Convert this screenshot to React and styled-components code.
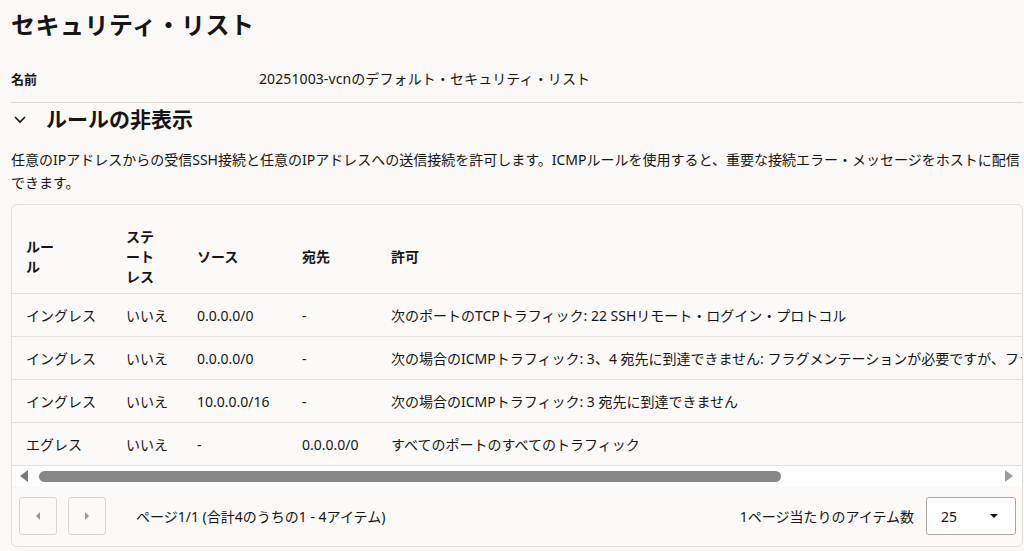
import styled, { createGlobalStyle } from "styled-components";

const GlobalStyle = createGlobalStyle`
  html, body {
    margin: 0;
    padding: 0;
    background: #fbf9f8;
    overflow: hidden;
  }
  body {
    font-family: "Noto Sans", "Noto Sans CJK JP", sans-serif;
    color: #161513;
  }
`;

const columns = "100px 71px 105px 89px 921px";
const tableWidth = 1300;
const viewWidth = 1010;

const rules = [
  {
    type: "イングレス",
    stateless: "いいえ",
    source: "0.0.0.0/0",
    dest: "-",
    allow: "次のポートのTCPトラフィック: 22 SSHリモート・ログイン・プロトコル",
  },
  {
    type: "イングレス",
    stateless: "いいえ",
    source: "0.0.0.0/0",
    dest: "-",
    allow:
      "次の場合のICMPトラフィック: 3、4 宛先に到達できません: フラグメンテーションが必要ですが、フラグメント化しないが設定されていました",
  },
  {
    type: "イングレス",
    stateless: "いいえ",
    source: "10.0.0.0/16",
    dest: "-",
    allow: "次の場合のICMPトラフィック: 3 宛先に到達できません",
  },
  {
    type: "エグレス",
    stateless: "いいえ",
    source: "-",
    dest: "0.0.0.0/0",
    allow: "すべてのポートのすべてのトラフィック",
  },
];

export default function App() {
  return (
    <Page>
      <GlobalStyle />
      <Title>セキュリティ・リスト</Title>
      <NameRow>
        <NameLabel>名前</NameLabel>
        <NameValue>20251003-vcnのデフォルト・セキュリティ・リスト</NameValue>
      </NameRow>
      <SectionHeader>
        <Chevron width="14" height="14" viewBox="0 0 14 14">
          <path d="M2 5 L7 10 L12 5" fill="none" stroke="#161513" strokeWidth="1.6" />
        </Chevron>
        <SectionTitle>ルールの非表示</SectionTitle>
      </SectionHeader>
      <Description>
        任意のIPアドレスからの受信SSH接続と任意のIPアドレスへの送信接続を許可します。ICMPルールを使用すると、重要な接続エラー・メッセージをホストに配信できます。
      </Description>
      <Card>
        <ScrollArea>
          <Table>
            <HeaderRow>
              <HeadCell>
                <HeadLabel $max={30}>ルール</HeadLabel>
              </HeadCell>
              <HeadCell>
                <HeadLabel $max={30}>ステートレス</HeadLabel>
              </HeadCell>
              <HeadCell>
                <HeadLabel>ソース</HeadLabel>
              </HeadCell>
              <HeadCell>
                <HeadLabel>宛先</HeadLabel>
              </HeadCell>
              <HeadCell>
                <HeadLabel>許可</HeadLabel>
              </HeadCell>
            </HeaderRow>
            {rules.map((r, i) => (
              <BodyRow key={i}>
                <Cell>{r.type}</Cell>
                <Cell>{r.stateless}</Cell>
                <Cell>{r.source}</Cell>
                <Cell>{r.dest}</Cell>
                <Cell>{r.allow}</Cell>
              </BodyRow>
            ))}
          </Table>
        </ScrollArea>
        <ScrollBar>
          <ScrollArrow $dir="left" />
          <Track>
            <Thumb style={{ width: `${(viewWidth / tableWidth) * 100}%` }} />
          </Track>
          <ScrollArrow $dir="right" />
        </ScrollBar>
        <Footer>
          <Pager>
            <PageButton aria-label="前へ">
              <Arrow $dir="left" />
            </PageButton>
            <PageButton aria-label="次へ">
              <Arrow $dir="right" />
            </PageButton>
            <PageInfo>ページ1/1 (合計4のうちの1 - 4アイテム)</PageInfo>
          </Pager>
          <PerPage>
            <PerPageLabel>1ページ当たりのアイテム数</PerPageLabel>
            <Select>
              <span>25</span>
              <Caret />
            </Select>
          </PerPage>
        </Footer>
      </Card>
    </Page>
  );
}

const Page = styled.div`
  width: 1012px;
  padding: 9px 0 0 11px;
`;

const Title = styled.h1`
  margin: 0;
  font-size: 24px;
  line-height: 32px;
  font-weight: 700;
  letter-spacing: 0.5px;
`;

const NameRow = styled.div`
  display: flex;
  align-items: center;
  height: 42px;
  margin-top: 16px;
  border-bottom: 1px solid #dedbd7;
  padding-bottom: 3px;
`;

const NameLabel = styled.div`
  width: 248px;
  font-size: 13px;
  font-weight: 700;
`;

const NameValue = styled.div`
  font-size: 14px;
  letter-spacing: 0.1px;
`;

const SectionHeader = styled.div`
  display: flex;
  align-items: center;
  height: 30px;
  margin-top: 1px;
`;

const Chevron = styled.svg`
  margin: 0 19px 0 2px;
`;

const SectionTitle = styled.h2`
  margin: 0;
  font-size: 21px;
  font-weight: 700;
  line-height: 30px;
`;

const Description = styled.p`
  margin: 14px 0 0;
  font-size: 14px;
  line-height: 23px;
`;

const Card = styled.div`
  margin-top: 10px;
  border: 1px solid #e2dfdb;
  border-radius: 6px;
  background: #fbfaf9;
  padding-top: 16px;
  overflow: hidden;
`;

const ScrollArea = styled.div`
  overflow: hidden;
`;

const Table = styled.div`
  width: ${tableWidth}px;
`;

const Row = styled.div`
  display: grid;
  grid-template-columns: ${columns};
  padding-left: 14px;
  align-items: center;
  border-bottom: 1px solid #e5e2de;
`;

const HeaderRow = styled(Row)`
  height: 72px;
`;

const BodyRow = styled(Row)`
  height: 42px;
`;

const HeadCell = styled.div`
  font-size: 14px;
  font-weight: 700;
  line-height: 20px;
`;

const HeadLabel = styled.div`
  max-width: ${(p) => (p.$max ? `${p.$max}px` : "none")};
`;

const Cell = styled.div`
  font-size: 14px;
  white-space: nowrap;
`;

const ScrollBar = styled.div`
  display: flex;
  align-items: center;
  height: 20px;
  background: #ffffff;
  padding: 0 9px 0 8px;
  gap: 11px;
`;

const ScrollArrow = styled.span`
  flex: none;
  width: 0;
  height: 0;
  border-top: 6px solid transparent;
  border-bottom: 6px solid transparent;
  ${(p) =>
    p.$dir === "left"
      ? "border-right: 8px solid #7a7a7a;"
      : "border-left: 8px solid #9c9c9c;"}
`;

const Track = styled.div`
  flex: 1;
  display: flex;
`;

const Thumb = styled.div`
  height: 11px;
  border-radius: 6px;
  background: #888888;
`;

const Footer = styled.div`
  display: flex;
  align-items: center;
  justify-content: space-between;
  height: 60px;
  padding: 0 6px 0 7px;
`;

const Pager = styled.div`
  display: flex;
  align-items: center;
  gap: 11px;
`;

const PageButton = styled.button`
  width: 38px;
  height: 38px;
  border: 1px solid #d9d6d2;
  border-radius: 3px;
  background: transparent;
  display: flex;
  align-items: center;
  justify-content: center;
  padding: 0;
`;

const Arrow = styled.span`
  width: 0;
  height: 0;
  border-top: 4px solid transparent;
  border-bottom: 4px solid transparent;
  ${(p) =>
    p.$dir === "left"
      ? "border-right: 4px solid #9a9894;"
      : "border-left: 4px solid #9a9894;"}
`;

const PageInfo = styled.span`
  margin-left: 19px;
  font-size: 14px;
`;

const PerPage = styled.div`
  display: flex;
  align-items: center;
  gap: 12px;
`;

const PerPageLabel = styled.span`
  font-size: 14px;
`;

const Select = styled.div`
  width: 90px;
  height: 38px;
  box-sizing: border-box;
  border: 1px solid #a9a6a2;
  border-radius: 3px;
  background: #fff;
  display: flex;
  align-items: center;
  justify-content: space-between;
  padding: 0 17px 0 14px;
  font-size: 14px;
`;

const Caret = styled.span`
  width: 0;
  height: 0;
  border-left: 4px solid transparent;
  border-right: 4px solid transparent;
  border-top: 4px solid #161513;
`;
